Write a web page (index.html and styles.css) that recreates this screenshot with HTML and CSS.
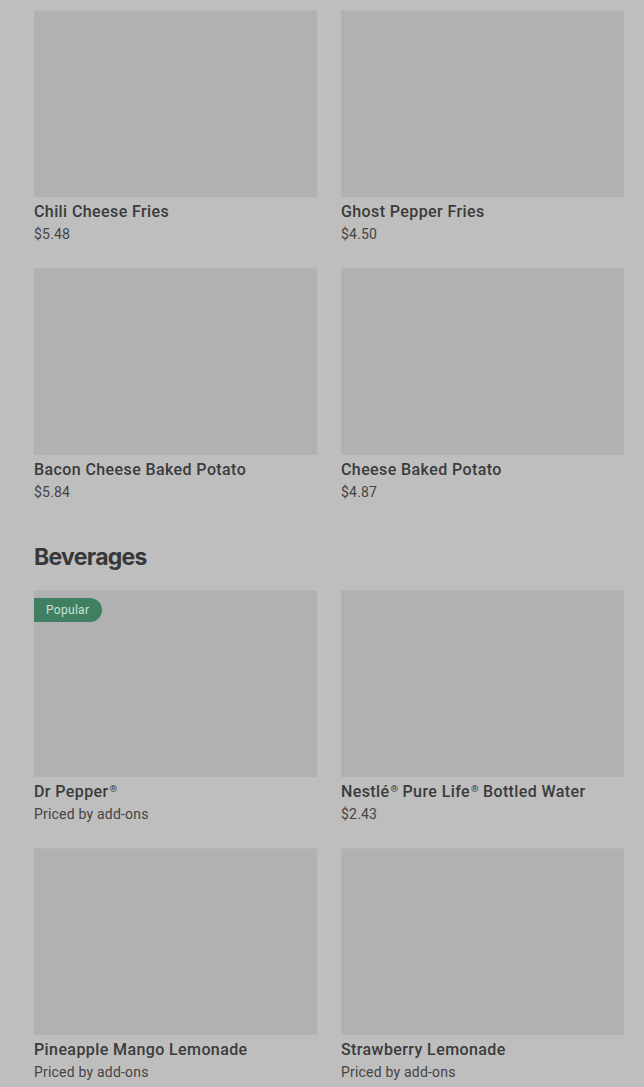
FILE: index.html
```html
<!DOCTYPE html>
<html lang="en">
<head>
<meta charset="utf-8">
<title>Menu</title>
<link rel="stylesheet" href="styles.css">
</head>
<body>
<main class="menu">
  <section class="section">
    <div class="grid">
      <div class="card">
        <div class="thumb"></div>
        <div class="name">Chili Cheese Fries</div>
        <div class="price">$5.48</div>
      </div>
      <div class="card">
        <div class="thumb"></div>
        <div class="name">Ghost Pepper Fries</div>
        <div class="price">$4.50</div>
      </div>
      <div class="card">
        <div class="thumb"></div>
        <div class="name">Bacon Cheese Baked Potato</div>
        <div class="price">$5.84</div>
      </div>
      <div class="card">
        <div class="thumb"></div>
        <div class="name">Cheese Baked Potato</div>
        <div class="price">$4.87</div>
      </div>
    </div>
  </section>
  <section class="section">
    <h2 class="heading">Beverages</h2>
    <div class="grid">
      <div class="card">
        <div class="thumb"><span class="badge">Popular</span></div>
        <div class="name">Dr Pepper<span class="reg">®</span></div>
        <div class="price">Priced by add-ons</div>
      </div>
      <div class="card">
        <div class="thumb"></div>
        <div class="name">Nestlé<span class="reg">®</span> Pure Life<span class="reg">®</span> Bottled Water</div>
        <div class="price">$2.43</div>
      </div>
      <div class="card">
        <div class="thumb"></div>
        <div class="name">Pineapple Mango Lemonade</div>
        <div class="price">Priced by add-ons</div>
      </div>
      <div class="card">
        <div class="thumb"></div>
        <div class="name">Strawberry Lemonade</div>
        <div class="price">Priced by add-ons</div>
      </div>
    </div>
  </section>
</main>
</body>
</html>
```

FILE: styles.css
```css
html, body {
  margin: 0;
  padding: 0;
  background: #bebebe;
}
body {
  font-family: Roboto, "Liberation Sans", sans-serif;
  color: #3a3a3a;
}
.menu {
  padding: 10px 20px 0 34px;
  display: flex;
  flex-direction: column;
}
.section + .section {
  margin-top: 39px;
}
.heading {
  margin: 0 0 17px 0;
  font-family: Inter, Roboto, sans-serif;
  font-size: 23px;
  line-height: 32px;
  font-weight: 700;
  letter-spacing: -0.7px;
  color: #383838;
}
.grid {
  display: grid;
  grid-template-columns: 283px 283px;
  column-gap: 24px;
  row-gap: 24px;
}
.card {
  display: flex;
  flex-direction: column;
}
.thumb {
  position: relative;
  height: 187px;
  background: #b1b1b1;
  box-shadow: inset 0 1px 0 #b6b6b6;
}
.name {
  margin-top: 3px;
  font-size: 16px;
  line-height: 24px;
  font-weight: 500;
  letter-spacing: 0.4px;
  color: #3b3b3b;
}
.reg {
  font-size: 0.6em;
  vertical-align: 0.55em;
  line-height: 0;
  letter-spacing: 0;
  margin-left: 1px;
}
.price {
  margin-top: 0;
  font-size: 14px;
  line-height: 20px;
  font-weight: 400;
  letter-spacing: 0.2px;
  color: #444444;
}
.badge {
  position: absolute;
  top: 8px;
  left: 0;
  height: 24px;
  padding: 0 13px 0 12px;
  display: flex;
  align-items: center;
  background: #3f8063;
  color: #cfe1d7;
  font-size: 12px;
  letter-spacing: 0.3px;
  border-radius: 0 12px 12px 0;
}
```
